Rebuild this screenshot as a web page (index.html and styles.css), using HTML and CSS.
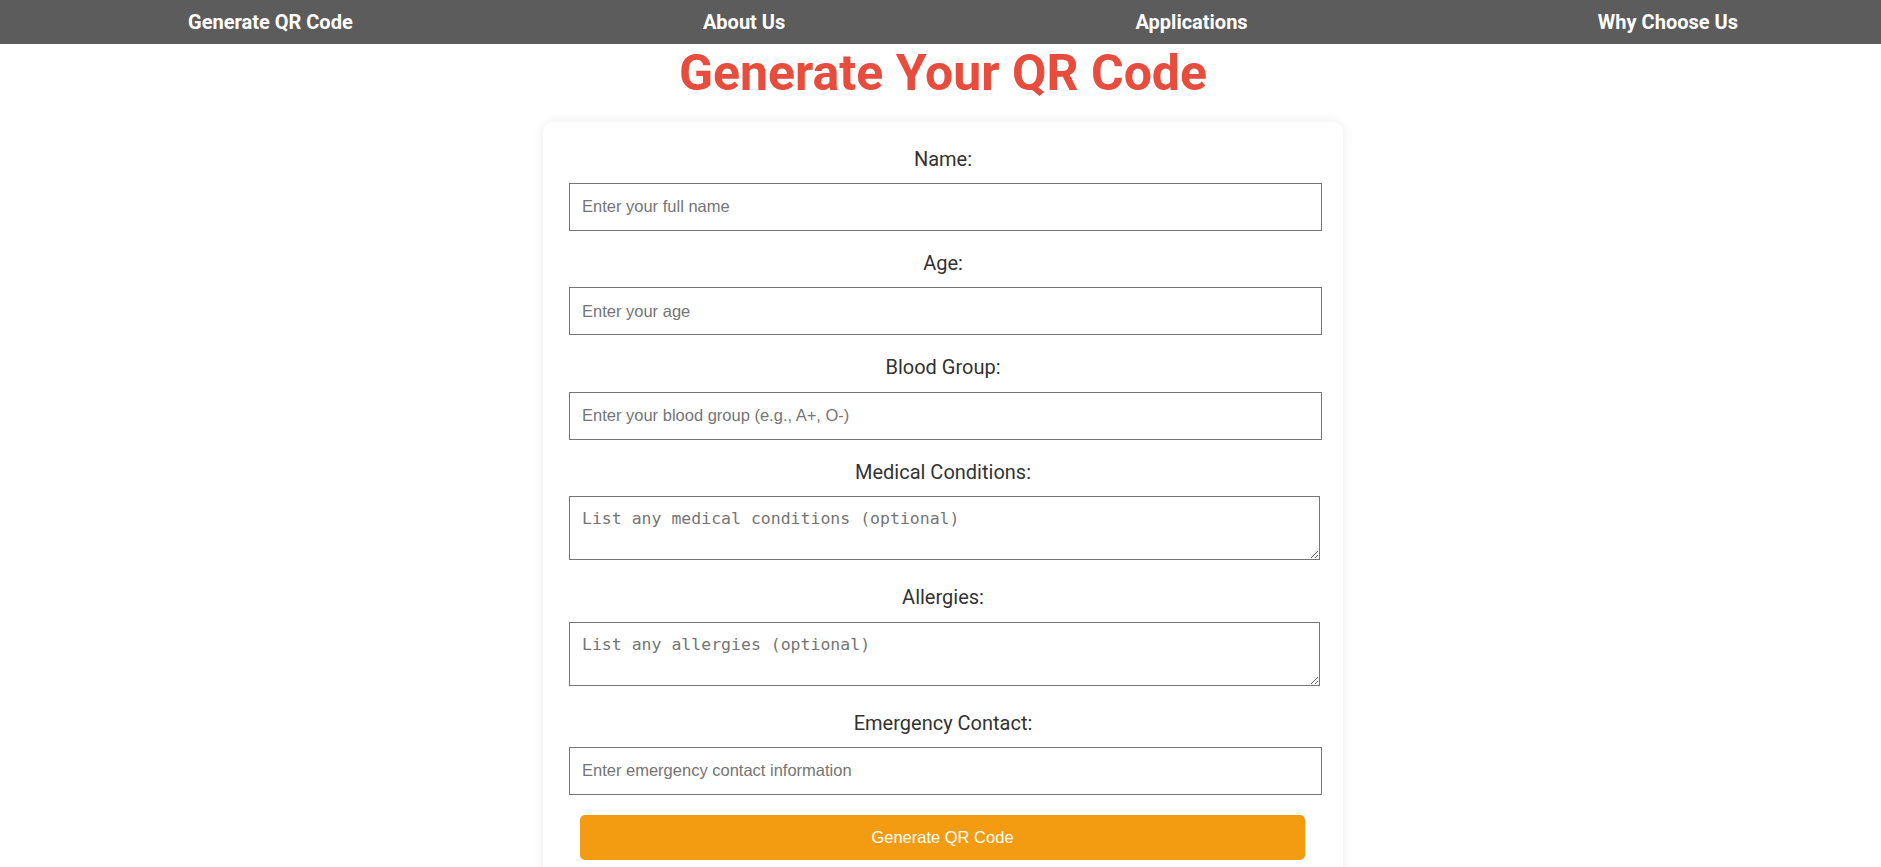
FILE: index.html
```html
<!DOCTYPE html>
<html lang="en">
<head>
<meta charset="UTF-8">
<title>Generate Your QR Code</title>
<link rel="stylesheet" href="styles.css">
</head>
<body>
<nav class="topnav">
  <ul class="nav-list">
    <li class="nav-item"><a class="nav-link" href="#generate">Generate QR Code</a></li>
    <li class="nav-item"><a class="nav-link" href="#about">About Us</a></li>
    <li class="nav-item"><a class="nav-link" href="#applications">Applications</a></li>
    <li class="nav-item"><a class="nav-link" href="#why">Why Choose Us</a></li>
  </ul>
</nav>
<div class="page">
  <h1 class="title">Generate Your QR Code</h1>
  <main class="card">
    <form class="qr-form">
      <label class="field-label" for="name">Name:</label>
      <input class="field-input" type="text" id="name" placeholder="Enter your full name">

      <label class="field-label" for="age">Age:</label>
      <input class="field-input" type="text" id="age" placeholder="Enter your age">

      <label class="field-label" for="blood">Blood Group:</label>
      <input class="field-input" type="text" id="blood" placeholder="Enter your blood group (e.g., A+, O-)">

      <label class="field-label" for="conditions">Medical Conditions:</label>
      <textarea class="field-area" id="conditions" placeholder="List any medical conditions (optional)"></textarea>

      <label class="field-label" for="allergies">Allergies:</label>
      <textarea class="field-area" id="allergies" placeholder="List any allergies (optional)"></textarea>

      <label class="field-label" for="contact">Emergency Contact:</label>
      <input class="field-input" type="text" id="contact" placeholder="Enter emergency contact information">

      <button class="submit-btn" type="button">Generate QR Code</button>
    </form>
  </main>
</div>
</body>
</html>
```

FILE: styles.css
```css
* {
  box-sizing: border-box;
}

body {
  margin: 0;
  background: #ffffff;
  font-family: Roboto, "Liberation Sans", Arial, sans-serif;
  color: #333333;
}

.topnav {
  background: #5c5c5c;
  height: 44px;
}

.nav-list {
  list-style: none;
  margin: 0;
  padding: 0 143px 0 188px;
  height: 100%;
  display: flex;
  align-items: center;
  justify-content: space-between;
}

.nav-link {
  color: #ffffff;
  text-decoration: none;
  font-weight: 700;
  font-size: 20px;
}

.page {
  padding-left: 5px;
}

.title {
  margin: 0 0 20px;
  text-align: center;
  color: #e74c3c;
  font-size: 50px;
  font-weight: 700;
  line-height: 58px;
}

.card {
  width: 800px;
  margin: 0 auto;
  background: #ffffff;
  border-radius: 10px;
  box-shadow: 0 0 12px rgba(0, 0, 0, 0.08);
  padding: 25.5px 0 30px;
}

.qr-form {
  display: flex;
  flex-direction: column;
}

.field-label {
  display: block;
  text-align: center;
  font-size: 20px;
  line-height: 23.4px;
  color: #333333;
  margin-bottom: 12px;
}

.field-input,
.field-area {
  display: block;
  margin-left: 26px;
  border: 1px solid #767676;
  border-radius: 0;
  background: #ffffff;
  color: #333333;
}

.field-input {
  width: 753px;
  height: 48px;
  padding: 0 12px;
  font-family: "Liberation Sans", Arial, sans-serif;
  font-size: 16.5px;
  margin-bottom: 21px;
}

.field-area {
  width: 751px;
  height: 64px;
  padding: 12px;
  font-family: "DejaVu Sans Mono", "Liberation Mono", monospace;
  font-size: 16.5px;
  margin-bottom: 26px;
}

.field-input::placeholder,
.field-area::placeholder {
  color: #757575;
}

.submit-btn {
  display: block;
  width: 725px;
  height: 45px;
  margin: -1px 0 0 37px;
  border: none;
  border-radius: 5px;
  background: #f39c12;
  color: #ffffff;
  font-family: "Liberation Sans", Arial, sans-serif;
  font-size: 16.5px;
  cursor: pointer;
}
```
